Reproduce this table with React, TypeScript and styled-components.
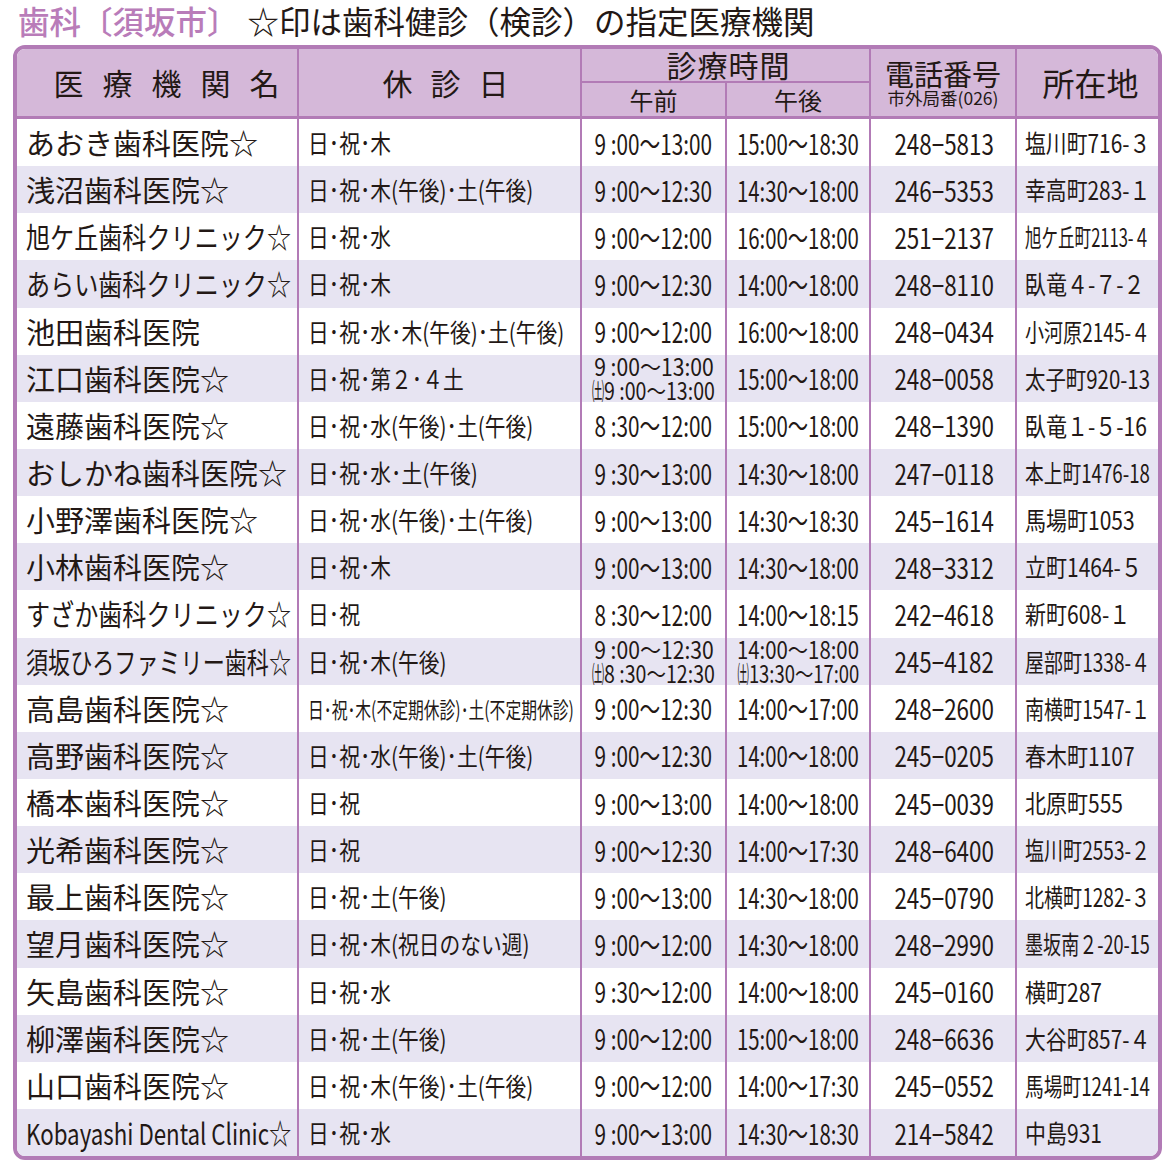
import { ReactNode, useLayoutEffect, useRef, useState } from "react";
import styled, { createGlobalStyle } from "styled-components";

const ink = "#231815";
const line = "#b27bb6";
const headBg = "#d5b8d9";
const stripe = "#e7e4f2";
const COLS = "280px 283px 145px 144px 146px 143px";
const SAT = "㈯";

type Clinic = {
    name: string,
    off: string,
    offSize?: number,
    am: string[],
    pm: string[],
    tel: string,
    address: string,
}

const clinics: Clinic[] = [
    {name: "あおき歯科医院☆", off: "日･祝･木", am: ["9 :00～13:00"], pm: ["15:00～18:30"], tel: "248−5813", address: "塩川町716-３"},
    {name: "浅沼歯科医院☆", off: "日･祝･木(午後)･土(午後)", am: ["9 :00～12:30"], pm: ["14:30～18:00"], tel: "246−5353", address: "幸高町283-１"},
    {name: "旭ケ丘歯科クリニック☆", off: "日･祝･水", am: ["9 :00～12:00"], pm: ["16:00～18:00"], tel: "251−2137", address: "旭ケ丘町2113-４"},
    {name: "あらい歯科クリニック☆", off: "日･祝･木", am: ["9 :00～12:30"], pm: ["14:00～18:00"], tel: "248−8110", address: "臥竜４-７-２"},
    {name: "池田歯科医院", off: "日･祝･水･木(午後)･土(午後)", am: ["9 :00～12:00"], pm: ["16:00～18:00"], tel: "248−0434", address: "小河原2145-４"},
    {name: "江口歯科医院☆", off: "日･祝･第２･４土", am: ["9 :00～13:00", SAT + "9 :00～13:00"], pm: ["15:00～18:00"], tel: "248−0058", address: "太子町920-13"},
    {name: "遠藤歯科医院☆", off: "日･祝･水(午後)･土(午後)", am: ["8 :30～12:00"], pm: ["15:00～18:00"], tel: "248−1390", address: "臥竜１-５-16"},
    {name: "おしかね歯科医院☆", off: "日･祝･水･土(午後)", am: ["9 :30～13:00"], pm: ["14:30～18:00"], tel: "247−0118", address: "本上町1476-18"},
    {name: "小野澤歯科医院☆", off: "日･祝･水(午後)･土(午後)", am: ["9 :00～13:00"], pm: ["14:30～18:30"], tel: "245−1614", address: "馬場町1053"},
    {name: "小林歯科医院☆", off: "日･祝･木", am: ["9 :00～13:00"], pm: ["14:30～18:00"], tel: "248−3312", address: "立町1464-５"},
    {name: "すざか歯科クリニック☆", off: "日･祝", am: ["8 :30～12:00"], pm: ["14:00～18:15"], tel: "242−4618", address: "新町608-１"},
    {name: "須坂ひろファミリー歯科☆", off: "日･祝･木(午後)", am: ["9 :00～12:30", SAT + "8 :30～12:30"], pm: ["14:00～18:00", SAT + "13:30～17:00"], tel: "245−4182", address: "屋部町1338-４"},
    {name: "高島歯科医院☆", off: "日･祝･木(不定期休診)･土(不定期休診)", offSize: 22, am: ["9 :00～12:30"], pm: ["14:00～17:00"], tel: "248−2600", address: "南横町1547-１"},
    {name: "高野歯科医院☆", off: "日･祝･水(午後)･土(午後)", am: ["9 :00～12:30"], pm: ["14:00～18:00"], tel: "245−0205", address: "春木町1107"},
    {name: "橋本歯科医院☆", off: "日･祝", am: ["9 :00～13:00"], pm: ["14:00～18:00"], tel: "245−0039", address: "北原町555"},
    {name: "光希歯科医院☆", off: "日･祝", am: ["9 :00～12:30"], pm: ["14:00～17:30"], tel: "248−6400", address: "塩川町2553-２"},
    {name: "最上歯科医院☆", off: "日･祝･土(午後)", am: ["9 :00～13:00"], pm: ["14:30～18:00"], tel: "245−0790", address: "北横町1282-３"},
    {name: "望月歯科医院☆", off: "日･祝･木(祝日のない週)", am: ["9 :00～12:00"], pm: ["14:30～18:00"], tel: "248−2990", address: "墨坂南２-20-15"},
    {name: "矢島歯科医院☆", off: "日･祝･水", am: ["9 :30～12:00"], pm: ["14:00～18:00"], tel: "245−0160", address: "横町287"},
    {name: "柳澤歯科医院☆", off: "日･祝･土(午後)", am: ["9 :00～12:00"], pm: ["15:00～18:00"], tel: "248−6636", address: "大谷町857-４"},
    {name: "山口歯科医院☆", off: "日･祝･木(午後)･土(午後)", am: ["9 :00～12:00"], pm: ["14:00～17:30"], tel: "245−0552", address: "馬場町1241-14"},
    {name: "Kobayashi Dental Clinic☆", off: "日･祝･水", am: ["9 :00～13:00"], pm: ["14:30～18:30"], tel: "214−5842", address: "中島931"},
];

// squeezes text horizontally (like the condensed print font) and
// narrows it further when it would not fit in its cell
function Fit({children, scale = 1, origin = "center"}: { children: ReactNode, scale?: number, origin?: string }) {
    const ref = useRef<HTMLSpanElement>(null);
    const [sx, setSx] = useState(scale);

    useLayoutEffect(() => {
        const el = ref.current;
        const cell = el?.parentElement;
        if (!el || !cell) return;
        const cs = getComputedStyle(cell);
        const room = cell.clientWidth - parseFloat(cs.paddingLeft) - parseFloat(cs.paddingRight);
        setSx(Math.min(scale, room / el.offsetWidth));
    }, [scale]);

    return (
        <Squeeze ref={ref} $origin={origin} style={{transform: `scaleX(${sx})`}}>
            {children}
        </Squeeze>
    );
}

function TimeText({text}: { text: string }) {
    if (!text.startsWith(SAT)) return <>{text}</>;
    return <><Sat>{SAT}</Sat>{text.slice(1)}</>;
}

function Times({lines}: { lines: string[] }) {
    const double = lines.length > 1;
    return (
        <Cell $size={double ? 24 : 28} $center $stack $pad={10}>
            {lines.map(t => (
                <Fit key={t} scale={double ? 0.88 : 0.74}>
                    <TimeText text={t}/>
                </Fit>
            ))}
        </Cell>
    );
}

export default function App() {
    return (
        <Page>
            <GlobalStyle/>
            <Title><Area>歯科〔須坂市〕</Area>☆印は歯科健診（検診）の指定医療機関</Title>
            <Table>
                <Head>
                    <HeadCell $col="1" $row="1 / 3" $size={30} $spacing={19} $shift={38} $first>医療機関名</HeadCell>
                    <HeadCell $col="2" $row="1 / 3" $size={30} $spacing={18} $shift={30}>休診日</HeadCell>
                    <HeadCell $col="3 / 5" $row="1" $size={30} $spacing={1} $shift={6} $rule>診療時間</HeadCell>
                    <HeadCell $col="3" $row="2" $size={24}>午前</HeadCell>
                    <HeadCell $col="4" $row="2" $size={24}>午後</HeadCell>
                    <HeadCell $col="5" $row="1 / 3" $size={29}>
                        <HeadMain>電話番号</HeadMain>
                        <HeadNote>市外局番(026)</HeadNote>
                    </HeadCell>
                    <HeadCell $col="6" $row="1 / 3" $size={32} $shift={6}>所在地</HeadCell>
                </Head>
                {clinics.map((c, i) => (
                    <Row key={c.name} $shade={i % 2 === 1}>
                        <Cell $size={29} $first>
                            <Fit origin="left">{c.name}</Fit>
                        </Cell>
                        <Cell $size={c.offSize || 25}>
                            <Fit scale={0.83} origin="left">{c.off}</Fit>
                        </Cell>
                        <Times lines={c.am}/>
                        <Times lines={c.pm}/>
                        <Cell $size={28} $center>
                            <Fit scale={0.8}>{c.tel}</Fit>
                        </Cell>
                        <Cell $size={25} $pad={8}>
                            <Fit scale={0.84} origin="left">{c.address}</Fit>
                        </Cell>
                    </Row>
                ))}
            </Table>
        </Page>
    );
}

/* CSS */

const GlobalStyle = createGlobalStyle`
  *, *::before, *::after {
    box-sizing: border-box;
  }

  body {
    margin: 0;
    background: #fff;
    color: ${ink};
    font-family: "Noto Sans CJK JP", "Noto Sans", sans-serif;
  }
`;

const Page = styled.div`
  width: 1175px;
  padding: 0 13px 8px;
`;

const Title = styled.h1`
  margin: 0;
  height: 40px;
  padding-left: 5px;
  font-size: 31.5px;
  line-height: 40px;
  font-weight: 400;
  white-space: nowrap;
`;

const Area = styled.span`
  color: #b97cb9;
  font-weight: 500;
  margin-right: 9px;
`;

const Table = styled.div`
  margin-top: 5px;
  width: 1149px;
  border: 4px solid ${line};
  border-radius: 12px;
  overflow: hidden;
`;

const Head = styled.div`
  display: grid;
  grid-template-columns: ${COLS};
  grid-template-rows: 34px 33px;
  background: ${headBg};
  border-bottom: 3px solid ${line};
`;

const HeadCell = styled.div<{
    $col: string, $row: string, $size: number,
    $spacing?: number, $shift?: number, $first?: boolean, $rule?: boolean
}>`
  grid-column: ${p => p.$col};
  grid-row: ${p => p.$row};
  display: flex;
  flex-direction: column;
  align-items: center;
  justify-content: center;
  padding-left: ${p => p.$shift || 0}px;
  border-left: ${p => p.$first ? "none" : `2px solid ${line}`};
  border-bottom: ${p => p.$rule ? `2px solid ${line}` : "none"};
  font-size: ${p => p.$size}px;
  letter-spacing: ${p => p.$spacing || 0}px;
  line-height: 1.05;
  white-space: nowrap;
`;

const HeadMain = styled.span`
  line-height: 30px;
`;

const HeadNote = styled.span`
  font-size: 17.5px;
  line-height: 19px;
`;

const Row = styled.div<{ $shade: boolean }>`
  display: grid;
  grid-template-columns: ${COLS};
  height: 47.15px;
  background: ${p => p.$shade ? stripe : "#fff"};
`;

const Cell = styled.div<{ $size: number, $first?: boolean, $center?: boolean, $stack?: boolean, $pad?: number }>`
  display: flex;
  flex-direction: ${p => p.$stack ? "column" : "row"};
  align-items: center;
  justify-content: ${p => p.$center ? "center" : "flex-start"};
  padding: 0 ${p => p.$pad || 6}px 0 ${p => p.$pad || 9}px;
  border-left: ${p => p.$first ? "none" : `2px solid ${line}`};
  font-size: ${p => p.$size}px;
  line-height: ${p => p.$size > 24 ? "1" : "24.5px"};
  overflow: hidden;
`;

const Squeeze = styled.span<{ $origin: string }>`
  display: inline-block;
  flex-shrink: 0;
  white-space: nowrap;
  transform-origin: ${p => p.$origin} center;
`;

const Sat = styled.span`
  display: inline-block;
  width: 0.62em;
  transform: scaleX(0.62);
  transform-origin: left center;
`;

/* CSS */
